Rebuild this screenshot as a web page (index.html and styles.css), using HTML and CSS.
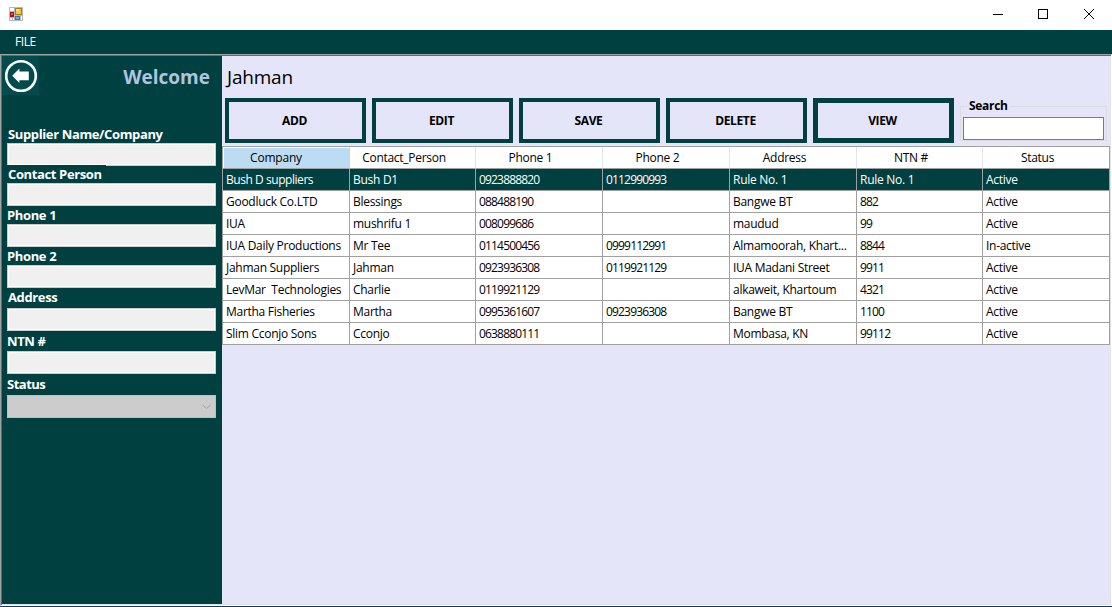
FILE: index.html
```html
<!DOCTYPE html>
<html lang="en">
<head>
<meta charset="utf-8">
<title>Suppliers</title>
<link rel="stylesheet" href="styles.css">
</head>
<body>
<div class="window">
  <header class="titlebar">
    <svg class="app-icon" width="14" height="14" viewBox="0 0 14 14" shape-rendering="crispEdges">
      <path fill="#b9b9b9" d="M0 0h14v14H0z"/><path fill="#fff" d="M1 1h4v3H1zM1 11h2v2H1zM4 11h1v2H4zM12 9h1v4h-1z"/>
      <path fill="#a31515" d="M1 5h4v5H1z"/><path fill="#e65545" d="M2 6h2v2H2z"/>
      <path fill="#b07c10" d="M6 1h7v7H6z"/><path fill="#f8c932" d="M7 2h5v5H7z"/><path fill="#ffe58a" d="M7 2h3v2H7z"/>
      <path fill="#3f70c8" d="M6 9h5v4H6z"/><path fill="#79a9ee" d="M7 10h3v2H7z"/>
    </svg>
    <svg class="controls" width="104" height="12" viewBox="0 0 104 12" fill="none" stroke="#000">
      <path d="M0 6.5h10" shape-rendering="crispEdges"/><path d="M45.5 1.500h9v9h-9z" shape-rendering="crispEdges"/><path d="M91 1l10 10M101 1L91 11"/>
    </svg>
  </header>
  <nav class="menubar"><span>FILE</span></nav>
  <main class="client">
    <aside class="sidebar">
      <div class="side-head">
        <svg class="back" width="37" height="39" viewBox="0 0 37 39">
          <path fill="#004b4b" d="M0 0h37v39H0z"/><circle cx="19" cy="20" r="14.800" fill="none" stroke="#fff" stroke-width="2.600"/>
          <path fill="#fff" d="M10.200 19.700L17.400 12.500V15.500H26.800V24.300H17.400V27z"/>
        </svg>
        <span class="welcome">Welcome</span>
      </div>
      <form class="form">
        <label class="lb w1">Supplier Name/Company</label><input class="field clipped" disabled>
        <label class="lb">Contact Person</label><input class="field" disabled>
        <label class="lb l18">Phone 1</label><input class="field" disabled>
        <label class="lb l18">Phone 2</label><input class="field" disabled>
        <label class="lb l20 in">Address</label><input class="field" disabled>
        <label class="lb l20 low">NTN #</label><input class="field" disabled>
        <label class="lb l21">Status</label>
        <div class="combo"><svg width="9" height="6" viewBox="0 0 9 6"><path d="M.5 .7L4.500 4.700 8.500 .7" fill="none" stroke="#a0a0a0"/></svg></div>
      </form>
    </aside>
    <section class="content">
      <h1 class="name">Jahman</h1>
      <div class="toolbar">
        <button class="btn">ADD</button><button class="btn">EDIT</button><button class="btn">SAVE</button><button class="btn">DELETE</button><button class="btn focus">VIEW</button>
        <div class="search"><span class="legend">Search</span><input class="query"></div>
      </div>
      <div class="grid">
        <div class="row head"><span class="cur">Company</span><span>Contact_Person</span><span>Phone 1</span><span>Phone 2</span><span>Address</span><span>NTN #</span><span>Status</span></div>
        <div class="row selected"><span class="t">Bush D suppliers</span><span>Bush D1</span><span class="n">0923888820</span><span class="n">0112990993</span><span>Rule No. 1</span><span>Rule No. 1</span><span>Active</span></div>
        <div class="row"><span>Goodluck Co.LTD</span><span>Blessings</span><span class="n">088488190</span><span></span><span>Bangwe BT</span><span class="n">882</span><span>Active</span></div>
        <div class="row"><span>IUA</span><span>mushrifu 1</span><span class="n">008099686</span><span></span><span>maudud</span><span class="n">99</span><span>Active</span></div>
        <div class="row"><span>IUA Daily Productions</span><span>Mr Tee</span><span class="n">0114500456</span><span class="n">0999112991</span><span>Almamoorah, Khart...</span><span class="n">8844</span><span>In-active</span></div>
        <div class="row"><span>Jahman Suppliers</span><span>Jahman</span><span class="n">0923936308</span><span class="n">0119921129</span><span>IUA Madani Street</span><span class="n">9911</span><span>Active</span></div>
        <div class="row"><span>LevMar&nbsp; Technologies</span><span>Charlie</span><span class="n">0119921129</span><span></span><span>alkaweit, Khartoum</span><span class="n">4321</span><span>Active</span></div>
        <div class="row"><span>Martha Fisheries</span><span>Martha</span><span class="n">0995361607</span><span class="n">0923936308</span><span>Bangwe BT</span><span class="n">1100</span><span>Active</span></div>
        <div class="row"><span>Slim Cconjo Sons</span><span>Cconjo</span><span class="n">0638880111</span><span></span><span>Mombasa, KN</span><span class="n">99112</span><span>Active</span></div>
      </div>
    </section>
  </main>
  <footer class="edge"></footer>
</div>
</body>
</html>
```
FILE: styles.css
```css
* { box-sizing: border-box; }
body { margin: 0; background: #fff; font: 12px "Open Sans", "Noto Sans", sans-serif; color: #000; }
.window { width: 1112px; height: 607px; display: flex; flex-direction: column; overflow: hidden; }
.titlebar { height: 30px; display: flex; justify-content: space-between; padding: 7px 17px 0 9px; background: #fff; }
.controls { margin-top: 1px; margin-right: -2px; }
.menubar { height: 24px; background: #004040; color: #fff; padding-left: 15px; line-height: 24px; letter-spacing: -.4px; }
.client { height: 552px; display: flex; background: #e4e5f9; border: 1px solid; border-color: #a0a0a0 #fff #fff #a0a0a0; box-shadow: inset 1px 1px #696969, inset -1px -1px #e3e3e3; padding: 1px 0 1px 1px; }
.sidebar { width: 220px; background: #004040; flex: none; }
.side-head { height: 70px; display: flex; justify-content: space-between; }
.welcome { font-size: 19px; font-weight: 700; color: #b0c4de; line-height: 42px; padding-right: 12px; }
.form { display: flex; flex-direction: column; padding-left: 5px; }
.lb { height: 17px; line-height: 17px; font-size: 13px; font-weight: 700; color: #fff; letter-spacing: -.37px; padding-left: 1px; white-space: nowrap; }
.l18 { height: 18px; line-height: 19px; padding-left: 0; }
.l20 { height: 20px; line-height: 19px; padding-left: 0; }
.l21 { height: 21px; line-height: 21px; padding-left: 0; letter-spacing: -.5px; }
.low { line-height: 21px; }
.in { padding-left: 1px; }
.field, .combo { width: 209px; height: 23px; border: 1px solid #ccc; background: #f0f0f0; box-shadow: inset 0 0 0 1px #fff; padding: 0; border-radius: 0; flex: none; }
.clipped { clip-path: polygon(0 0, 100% 0, 100% 100%, 99px 100%, 99px 22px, 0 22px); }
.combo { background: #ccc; border-color: #bfbfbf; box-shadow: none; display: flex; justify-content: flex-end; align-items: center; padding-right: 4px; }
.content { width: 887px; flex: none; }
.name { margin: 0; height: 42px; font-size: 19px; font-weight: 400; line-height: 42px; padding-left: 5px; letter-spacing: -.2px; }
.toolbar { height: 48px; display: flex; gap: 6px; padding-left: 3px; }
.btn { width: 141px; height: 45px; padding: 0 2px 0 0; border: 4px solid #004040; background: #e4e5f9; font: 700 12px "Open Sans", sans-serif; letter-spacing: -.35px; color: #000; }
.focus { border-width: 5px; }
.search { position: relative; width: 147px; height: 35px; margin-top: 8px; border: 1px solid #dcdcdc; padding: 10px 2px 0; }
.legend { position: absolute; left: 6px; top: -10px; padding: 0 2px; background: #e4e5f9; font-weight: 700; line-height: 18px; letter-spacing: -.3px; }
.query { display: block; width: 141px; height: 23px; border: 1px solid #7a7a7a; background: #fff; padding: 0; border-radius: 0; }
.grid { width: 888px; border: 1px solid #a0a0a0; border-bottom: 0; border-right: 0; background: #fff; }
.row { display: grid; grid-template-columns: 127px 126px 127px 127px 127px 126px 127px; height: 22px; }
.row span { border-right: 1px solid #a0a0a0; border-bottom: 1px solid #a0a0a0; padding-left: 3px; line-height: 22px; white-space: nowrap; letter-spacing: -.28px; overflow: hidden; }
.row .t { letter-spacing: -.45px; }
.row .n { letter-spacing: -.82px; }
.head span { text-align: center; border-right-color: #e5e5e5; padding: 0 17px 0 0; }
.head span:last-child { padding-right: 17px; border-right-color: #a0a0a0; }
.row .cur { background: #bcdcf4; border-right-color: #bcdcf4; box-shadow: inset 1px 1px #fff; padding-right: 20px; letter-spacing: -.2px; }
.selected span { background: #004040; color: #fff; }
.edge { height: 1px; background: #17385f; }
```
